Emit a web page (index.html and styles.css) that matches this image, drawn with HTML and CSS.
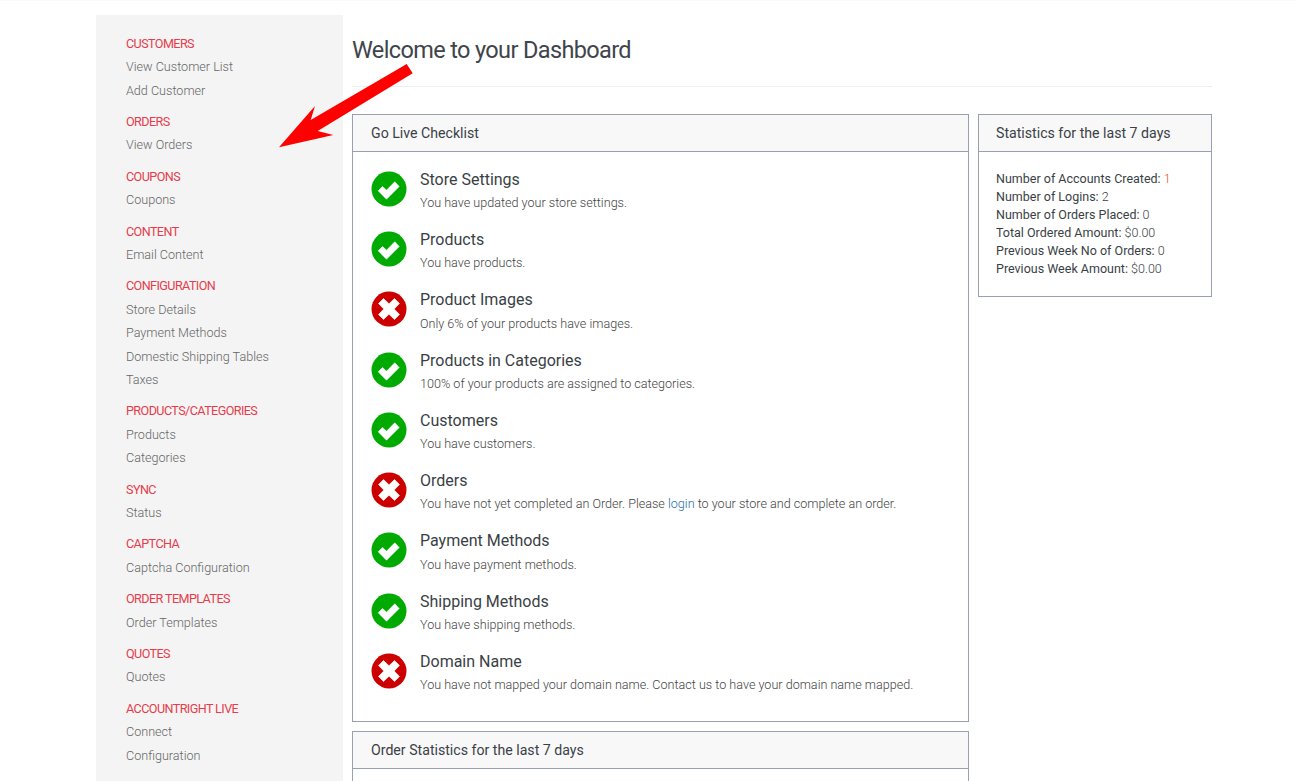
FILE: index.html
```html
<!DOCTYPE html>
<html lang="en">
<head>
<meta charset="utf-8">
<title>Dashboard</title>
<link rel="stylesheet" href="styles.css">
</head>
<body>
<div class="page">
  <aside class="sidebar">
    <div class="group"><div class="heading">CUSTOMERS</div><a class="link">View Customer List</a><a class="link">Add Customer</a></div>
    <div class="group"><div class="heading">ORDERS</div><a class="link">View Orders</a></div>
    <div class="group"><div class="heading">COUPONS</div><a class="link">Coupons</a></div>
    <div class="group"><div class="heading">CONTENT</div><a class="link">Email Content</a></div>
    <div class="group"><div class="heading">CONFIGURATION</div><a class="link">Store Details</a><a class="link">Payment Methods</a><a class="link">Domestic Shipping Tables</a><a class="link">Taxes</a></div>
    <div class="group"><div class="heading">PRODUCTS/CATEGORIES</div><a class="link">Products</a><a class="link">Categories</a></div>
    <div class="group"><div class="heading">SYNC</div><a class="link">Status</a></div>
    <div class="group"><div class="heading">CAPTCHA</div><a class="link">Captcha Configuration</a></div>
    <div class="group"><div class="heading">ORDER TEMPLATES</div><a class="link">Order Templates</a></div>
    <div class="group"><div class="heading">QUOTES</div><a class="link">Quotes</a></div>
    <div class="group"><div class="heading">ACCOUNTRIGHT LIVE</div><a class="link">Connect</a><a class="link">Configuration</a></div>
  </aside>
  <main class="main">
    <h1 class="title">Welcome to your Dashboard</h1>
    <div class="columns">
      <div class="col-left">
        <section class="panel">
          <div class="panel-head">Go Live Checklist</div>
          <div class="checklist">
            <div class="row"><svg class="icon" viewBox="0 0 36 36"><circle class="ok" cx="18" cy="18" r="17.5"/><path class="mark" d="M7.2 19.8 11.5 15.5 15.5 19.2 23.8 10.8 28.2 15.5 15.5 28.2z"/></svg><div><div class="row-title">Store Settings</div><div class="row-text">You have updated your store settings.</div></div></div>
            <div class="row"><svg class="icon" viewBox="0 0 36 36"><circle class="ok" cx="18" cy="18" r="17.5"/><path class="mark" d="M7.2 19.8 11.5 15.5 15.5 19.2 23.8 10.8 28.2 15.5 15.5 28.2z"/></svg><div><div class="row-title">Products</div><div class="row-text">You have products.</div></div></div>
            <div class="row"><svg class="icon" viewBox="0 0 36 36"><circle class="bad" cx="18" cy="18" r="17.5"/><path class="mark" d="M12.5 7.5 18 12.8 23.5 7.5 28.5 12.5 23.2 18 28.5 23.5 23.5 28.5 18 23.2 12.5 28.5 7.5 23.5 12.8 18 7.5 12.5z"/></svg><div><div class="row-title">Product Images</div><div class="row-text">Only 6% of your products have images.</div></div></div>
            <div class="row"><svg class="icon" viewBox="0 0 36 36"><circle class="ok" cx="18" cy="18" r="17.5"/><path class="mark" d="M7.2 19.8 11.5 15.5 15.5 19.2 23.8 10.8 28.2 15.5 15.5 28.2z"/></svg><div><div class="row-title">Products in Categories</div><div class="row-text">100% of your products are assigned to categories.</div></div></div>
            <div class="row"><svg class="icon" viewBox="0 0 36 36"><circle class="ok" cx="18" cy="18" r="17.5"/><path class="mark" d="M7.2 19.8 11.5 15.5 15.5 19.2 23.8 10.8 28.2 15.5 15.5 28.2z"/></svg><div><div class="row-title">Customers</div><div class="row-text">You have customers.</div></div></div>
            <div class="row"><svg class="icon" viewBox="0 0 36 36"><circle class="bad" cx="18" cy="18" r="17.5"/><path class="mark" d="M12.5 7.5 18 12.8 23.5 7.5 28.5 12.5 23.2 18 28.5 23.5 23.5 28.5 18 23.2 12.5 28.5 7.5 23.5 12.8 18 7.5 12.5z"/></svg><div><div class="row-title">Orders</div><div class="row-text">You have not yet completed an Order. Please <a class="inline-link">login</a> to your store and complete an order.</div></div></div>
            <div class="row"><svg class="icon" viewBox="0 0 36 36"><circle class="ok" cx="18" cy="18" r="17.5"/><path class="mark" d="M7.2 19.8 11.5 15.5 15.5 19.2 23.8 10.8 28.2 15.5 15.5 28.2z"/></svg><div><div class="row-title">Payment Methods</div><div class="row-text">You have payment methods.</div></div></div>
            <div class="row"><svg class="icon" viewBox="0 0 36 36"><circle class="ok" cx="18" cy="18" r="17.5"/><path class="mark" d="M7.2 19.8 11.5 15.5 15.5 19.2 23.8 10.8 28.2 15.5 15.5 28.2z"/></svg><div><div class="row-title">Shipping Methods</div><div class="row-text">You have shipping methods.</div></div></div>
            <div class="row"><svg class="icon" viewBox="0 0 36 36"><circle class="bad" cx="18" cy="18" r="17.5"/><path class="mark" d="M12.5 7.5 18 12.8 23.5 7.5 28.5 12.5 23.2 18 28.5 23.5 23.5 28.5 18 23.2 12.5 28.5 7.5 23.5 12.8 18 7.5 12.5z"/></svg><div><div class="row-title">Domain Name</div><div class="row-text">You have not mapped your domain name. Contact us to have your domain name mapped.</div></div></div>
          </div>
        </section>
        <section class="panel">
          <div class="panel-head">Order Statistics for the last 7 days</div>
          <div class="panel-rest"></div>
        </section>
      </div>
      <div class="col-right">
        <section class="panel">
          <div class="panel-head">Statistics for the last 7 days</div>
          <div class="stats">
            <div class="stat">Number of Accounts Created: <span class="value-accent">1</span></div>
            <div class="stat">Number of Logins: <span class="value">2</span></div>
            <div class="stat">Number of Orders Placed: <span class="value">0</span></div>
            <div class="stat">Total Ordered Amount: <span class="value">$0.00</span></div>
            <div class="stat">Previous Week No of Orders: <span class="value">0</span></div>
            <div class="stat">Previous Week Amount: <span class="value">$0.00</span></div>
          </div>
        </section>
      </div>
    </div>
  </main>
</div>
<svg class="arrow" viewBox="0 0 1296 781"><polygon points="406.7,64 412.7,73.3 317.7,131 333.3,135 279,147.3 315,106 310.7,120"/></svg>
</body>
</html>
```
FILE: styles.css
```css
html, body { margin: 0; padding: 0; height: 781px; overflow: hidden; background: #fff; }
body { font-family: Roboto, "Liberation Sans", sans-serif; color: #3a3f46; }
.page { display: flex; align-items: flex-start; gap: 9px; padding: 14px 84px 0 96px; border-top: 1px solid #fafafa; }
.sidebar { width: 217px; flex: none; background: #f4f4f4; padding: 16.7px 0 100px 30px; font-size: 12.6px; line-height: 23.4px; }
.group { margin-bottom: 8px; }
.heading { color: #e63c4c; letter-spacing: -0.58px; }
.link { display: block; color: #666; font-weight: 300; }
.main { flex: 1; min-width: 0; }
.title { margin: 0; padding: 20px 0 21px; font-size: 23.5px; letter-spacing: -0.63px; line-height: 30px; font-weight: 400; color: #40444b; border-bottom: 1px solid #eee; }
.columns { display: flex; gap: 9px; margin-top: 27px; align-items: flex-start; }
.col-left { width: 617px; flex: none; display: flex; flex-direction: column; gap: 9px; }
.col-right { flex: 1; min-width: 0; }
.panel { border: 1px solid #9a9fb2; }
.panel-head { height: 36px; line-height: 36px; padding: 0 18px; font-size: 14.15px; background: #f8f8f9; border-bottom: 1px solid #9a9fb2; }
.col-right .panel-head { padding-left: 17px; }
.checklist { padding: 17.75px 18px 9px; }
.row { display: flex; gap: 13px; height: 60.25px; }
.icon { width: 36px; height: 36px; flex: none; margin-top: 1px; margin-bottom: -1px; }
.ok { fill: #00aa00; }
.bad { fill: #cc0000; }
.mark { fill: #fff; stroke: #fff; stroke-width: 0.6; stroke-linejoin: round; }
.row-title { font-size: 16px; line-height: 20px; }
.row-text { font-size: 12.6px; font-weight: 300; line-height: 20px; margin-top: 3.4px; color: #444; }
.inline-link { color: #2a6ea6; }
.panel-rest { height: 60px; }
.stats { padding: 18px 17px 18px; font-size: 12.5px; line-height: 18px; }
.stat { color: #3a3f46; }
.value { font-weight: 300; }
.value-accent { font-weight: 300; color: #e8503f; }
.arrow { position: absolute; left: 0; top: 0; width: 1296px; height: 781px; pointer-events: none; }
.arrow polygon { fill: #ff0000; }
```
